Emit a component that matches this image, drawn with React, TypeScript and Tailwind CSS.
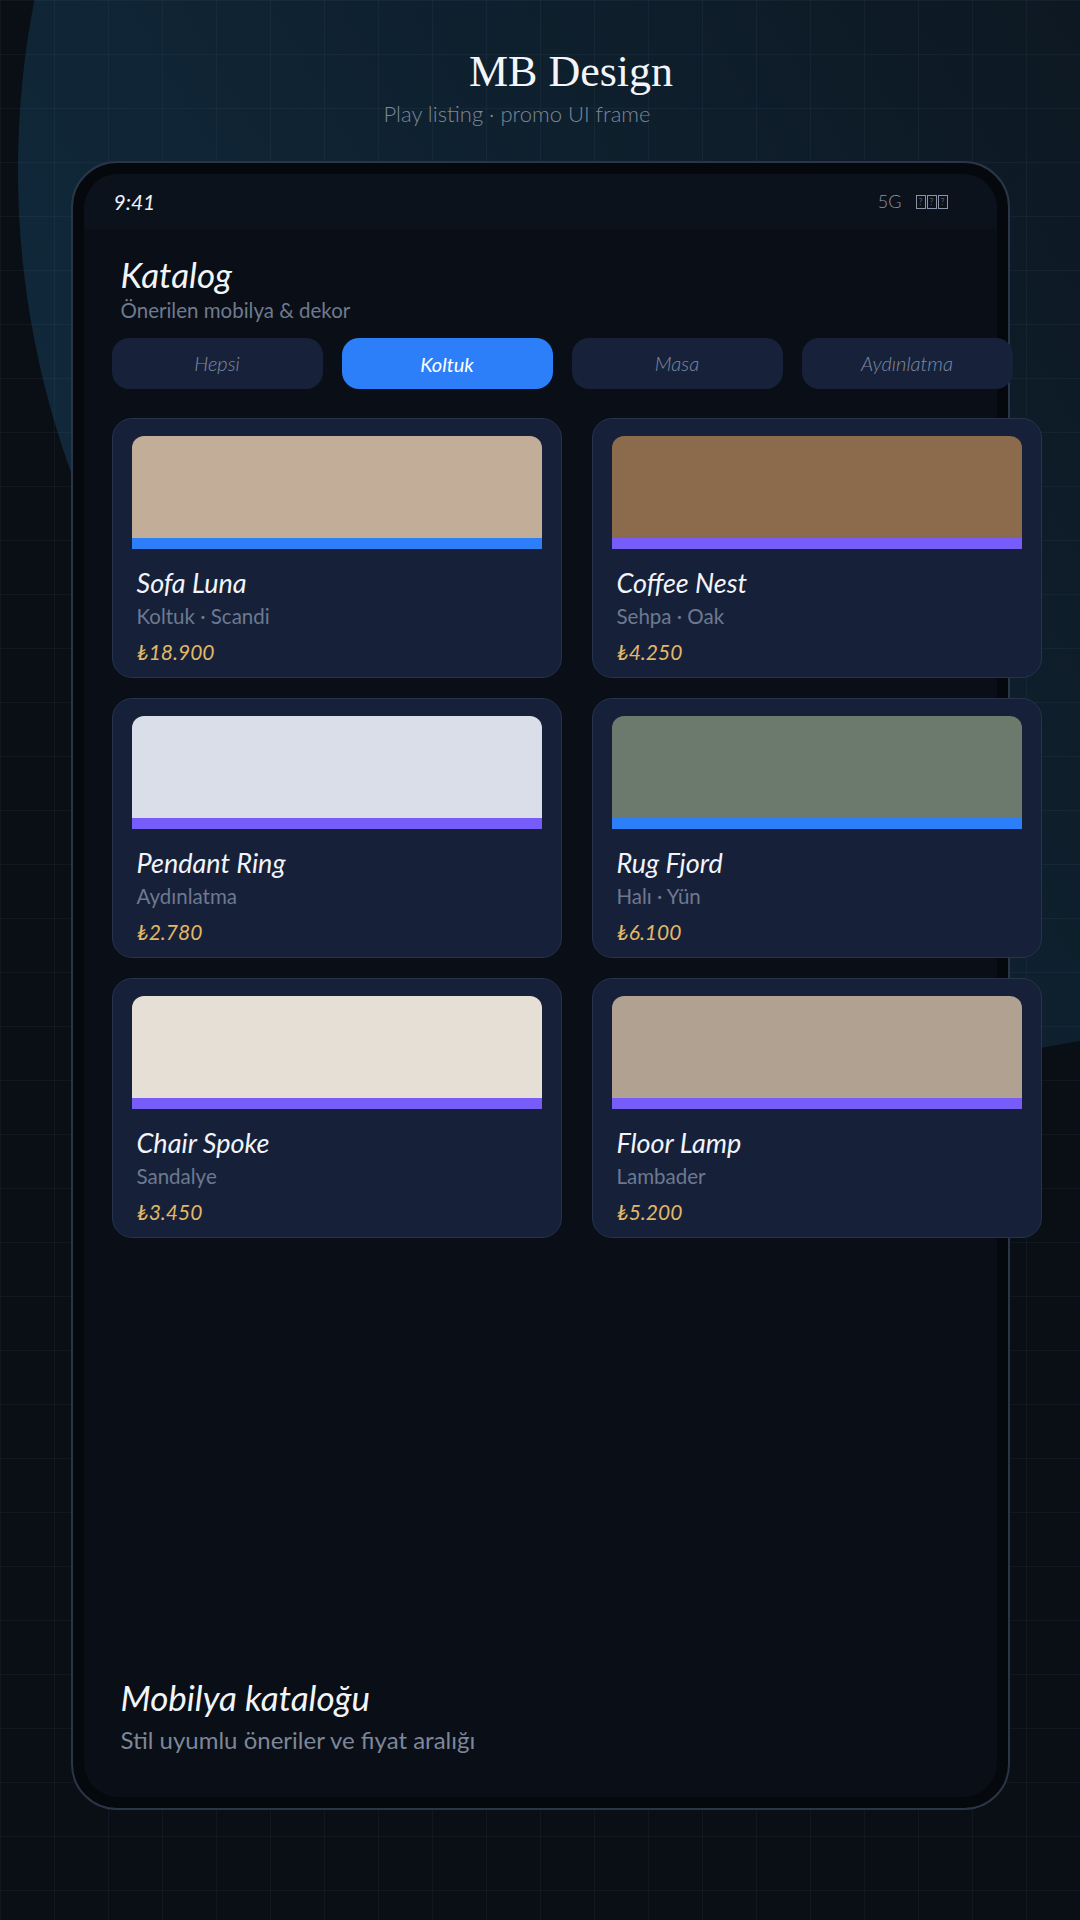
import React from "react";

const products = [
  { name: "Sofa Luna",    meta: "Koltuk · Scandi", price: "₺18.900", img: "bg-[#c2ad98]", bar: "bg-[#2d7ff9]" },
  { name: "Coffee Nest",  meta: "Sehpa · Oak",     price: "₺4.250",  img: "bg-[#8b6b4b]", bar: "bg-[#765cf8]" },
  { name: "Pendant Ring", meta: "Aydınlatma",      price: "₺2.780",  img: "bg-[#d9dee8]", bar: "bg-[#765cf8]" },
  { name: "Rug Fjord",    meta: "Halı · Yün",      price: "₺6.100",  img: "bg-[#6b7a6c]", bar: "bg-[#2d7ff9]" },
  { name: "Chair Spoke",  meta: "Sandalye",        price: "₺3.450",  img: "bg-[#e6dfd6]", bar: "bg-[#765cf8]" },
  { name: "Floor Lamp",   meta: "Lambader",        price: "₺5.200",  img: "bg-[#b0a191]", bar: "bg-[#765cf8]" },
];

const chips = ["Hepsi", "Koltuk", "Masa", "Aydınlatma"];

function ProductCard({ p }: { p: (typeof products)[number] }) {
  return (
    <div className="flex h-[260px] flex-col rounded-[20px] border border-[#26334b] bg-[#162139] px-[19px] pt-[17px]">
      <div className={`h-[102px] rounded-t-[12px] ${p.img}`} />
      <div className={`h-[11px] ${p.bar}`} />
      <div className="px-[5px]">
        <p className="mt-[20px] text-[27px] italic leading-none text-[#f1f4f9]">{p.name}</p>
        <p className="mt-[10px] text-[20.5px] leading-none text-[#6d7990]">{p.meta}</p>
        <p className="mt-[15px] text-[21px] italic leading-none text-[#e2b866]">{p.price}</p>
      </div>
    </div>
  );
}

// status icons (signal / wifi / battery) shown as small boxes
function StatusGlyphs() {
  return (
    <div className="flex gap-px">
      {[0, 1, 2].map((i) => (
        <span
          key={i}
          className="flex h-[14px] w-[10px] items-center justify-center border border-[#8a94a7] text-[9px] leading-none text-[#8a94a7]"
        >
          ?
        </span>
      ))}
    </div>
  );
}

export default function App() {
  return (
    <div className="relative h-[1920px] w-[1080px] overflow-hidden bg-[#0a0e15] font-['Lato','Open_Sans',sans-serif]">
      {/* backdrop: glow circle + grid */}
      <div className="absolute left-[18px] top-[-718px] h-[1776px] w-[1776px] rounded-full bg-[linear-gradient(60deg,#10283a_15%,#0d1822_60%,#0b1119_85%)]" />
      <div className="absolute inset-0 bg-[linear-gradient(to_right,rgba(120,140,170,0.07)_1px,transparent_1px),linear-gradient(to_bottom,rgba(120,140,170,0.07)_1px,transparent_1px)] bg-[size:54px_54px]" />

      <div className="relative flex flex-col items-center pt-[50px]">
        <h1 className="ml-[62px] font-['Liberation_Serif',serif] text-[44px] leading-none text-[#f3f5fa]">
          MB Design
        </h1>
        <p className="mr-[46px] mt-[9px] text-[22px] font-light leading-none text-[#7d8798]">
          Play listing · promo UI frame
        </p>

        {/* phone */}
        <div className="mt-[36px] h-[1649px] w-[939px] rounded-[46px] border-2 border-[#2b3548] bg-[#05080d] p-[11px]">
          <div className="flex h-full flex-col rounded-[34px] bg-[#0a0e16]">
            {/* status bar */}
            <div className="flex h-[55px] shrink-0 items-center justify-between rounded-t-[34px] bg-[#0c121b] pl-[30px] pr-[49px]">
              <span className="text-[21px] italic text-[#eef2f7]">9:41</span>
              <div className="flex items-center gap-[14px] text-[18px] font-light text-[#8a94a7]">
                <span>5G</span>
                <StatusGlyphs />
              </div>
            </div>

            <div className="pl-[37px] pt-[28px]">
              <h2 className="text-[35px] italic leading-none text-[#f1f4f9]">Katalog</h2>
              <p className="mt-[8px] text-[20.5px] leading-none text-[#6e7a8f]">Önerilen mobilya &amp; dekor</p>
            </div>

            <div className="mt-[17px] flex gap-[19px] pl-[28px]">
              {chips.map((c) => (
                <div
                  key={c}
                  className={
                    c === "Koltuk"
                      ? "flex h-[51px] w-[211px] shrink-0 items-center justify-center rounded-[17px] bg-[#2d7ff9] pt-[2px] text-[20px] italic text-white"
                      : "flex h-[51px] w-[211px] shrink-0 items-center justify-center rounded-[17px] bg-[#17223a] text-[20px] font-light italic text-[#7e8aa4]"
                  }
                >
                  {c}
                </div>
              ))}
            </div>

            <div className="mt-[29px] grid grid-cols-[450px_450px] gap-x-[30px] gap-y-[20px] pl-[28px]">
              {products.map((p) => (
                <ProductCard key={p.name} p={p} />
              ))}
            </div>

            <div className="mt-auto pb-[45px] pl-[37px]">
              <h3 className="text-[35px] italic leading-none text-[#f1f4f9]">Mobilya kataloğu</h3>
              <p className="mt-[13px] text-[24px] leading-none text-[#7c8799]">Stil uyumlu öneriler ve fiyat aralığı</p>
            </div>
          </div>
        </div>
      </div>
    </div>
  );
}
